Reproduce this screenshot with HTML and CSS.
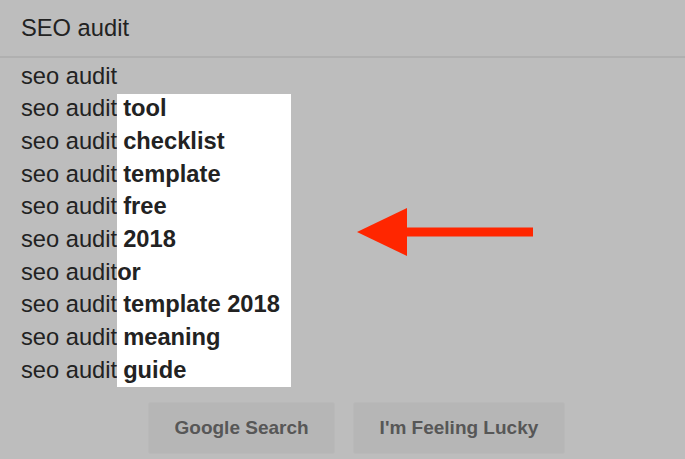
FILE: index.html
```html
<!DOCTYPE html>
<html lang="en">
<head>
  <meta charset="UTF-8">
  <meta name="viewport" content="width=device-width,initial-scale=1.0">
  <title>SEO audit | Suggestions</title>
  <link rel="stylesheet" href="styles.css">
</head>
<body>

  <div class="search-box">SEO audit</div>

  <div class="suggestions">
    <div class="row">seo audit</div>

    <div class="group">
      <div class="prefix-col">
        <div class="row">seo audit</div>
        <div class="row">seo audit</div>
        <div class="row">seo audit</div>
        <div class="row">seo audit</div>
        <div class="row">seo audit</div>
        <div class="row">seo audit</div>
        <div class="row">seo audit</div>
        <div class="row">seo audit</div>
        <div class="row">seo audit</div>
      </div>

      <!-- highlighted completions -->
      <div class="suffix-col">
        <div class="row sfx">tool</div>
        <div class="row sfx">checklist</div>
        <div class="row sfx">template</div>
        <div class="row sfx">free</div>
        <div class="row sfx">2018</div>
        <div class="row">or</div>
        <div class="row sfx">template 2018</div>
        <div class="row sfx">meaning</div>
        <div class="row sfx">guide</div>
      </div>

      <svg class="arrow" width="178" height="52" viewBox="0 0 178 52">
        <rect x="48" y="21.5" width="128" height="9" fill="#ff2600"/>
        <polygon points="0,26 50,2 50,50" fill="#ff2600"/>
      </svg>
    </div>
  </div>

  <div class="buttons">
    <button>Google Search</button>
    <button class="lucky">I'm Feeling Lucky</button>
  </div>

</body>
</html>
```

FILE: styles.css
```css
/* dimmed google suggest dropdown */
body {
  margin: 0;
  padding: 0;
  background: #bdbdbd;
  font-family: "Liberation Sans", Arial, sans-serif;
  color: #222;
  width: 685px;
  height: 459px;
  overflow: hidden;
}
.search-box {
  height: 58px;
  padding-left: 21px;
  font-size: 23.7px;
  line-height: 56px;
  border-bottom: 2px solid #b0b0b0;
  box-sizing: border-box;
}
.suggestions {
  padding-top: 1.5px;
  padding-left: 21px;
  font-size: 23.7px;
}
.row {
  line-height: 32.7px;
  white-space: nowrap;
}
.group {
  display: flex;
  align-items: flex-start;
}
.suffix-col {
  width: 174px;
  font-weight: bold;
  background: linear-gradient(to bottom, transparent 1.5px, #fff 1.5px);
}
.sfx {
  padding-left: 6px;
}
.arrow {
  margin-left: 66px;
  margin-top: 113.5px;
}
.buttons {
  display: flex;
  gap: 18px;
  margin-top: 15.5px;
  padding-left: 148px;
}
button {
  height: 52px;
  padding: 0 25.5px;
  border: 1px solid #b9b9b9;
  border-radius: 3px;
  background: #b6b6b6;
  color: #575757;
  font-family: "Liberation Sans", Arial, sans-serif;
  font-weight: bold;
  font-size: 19px;
}
button.lucky {
  padding: 0 25.5px;
}
```
